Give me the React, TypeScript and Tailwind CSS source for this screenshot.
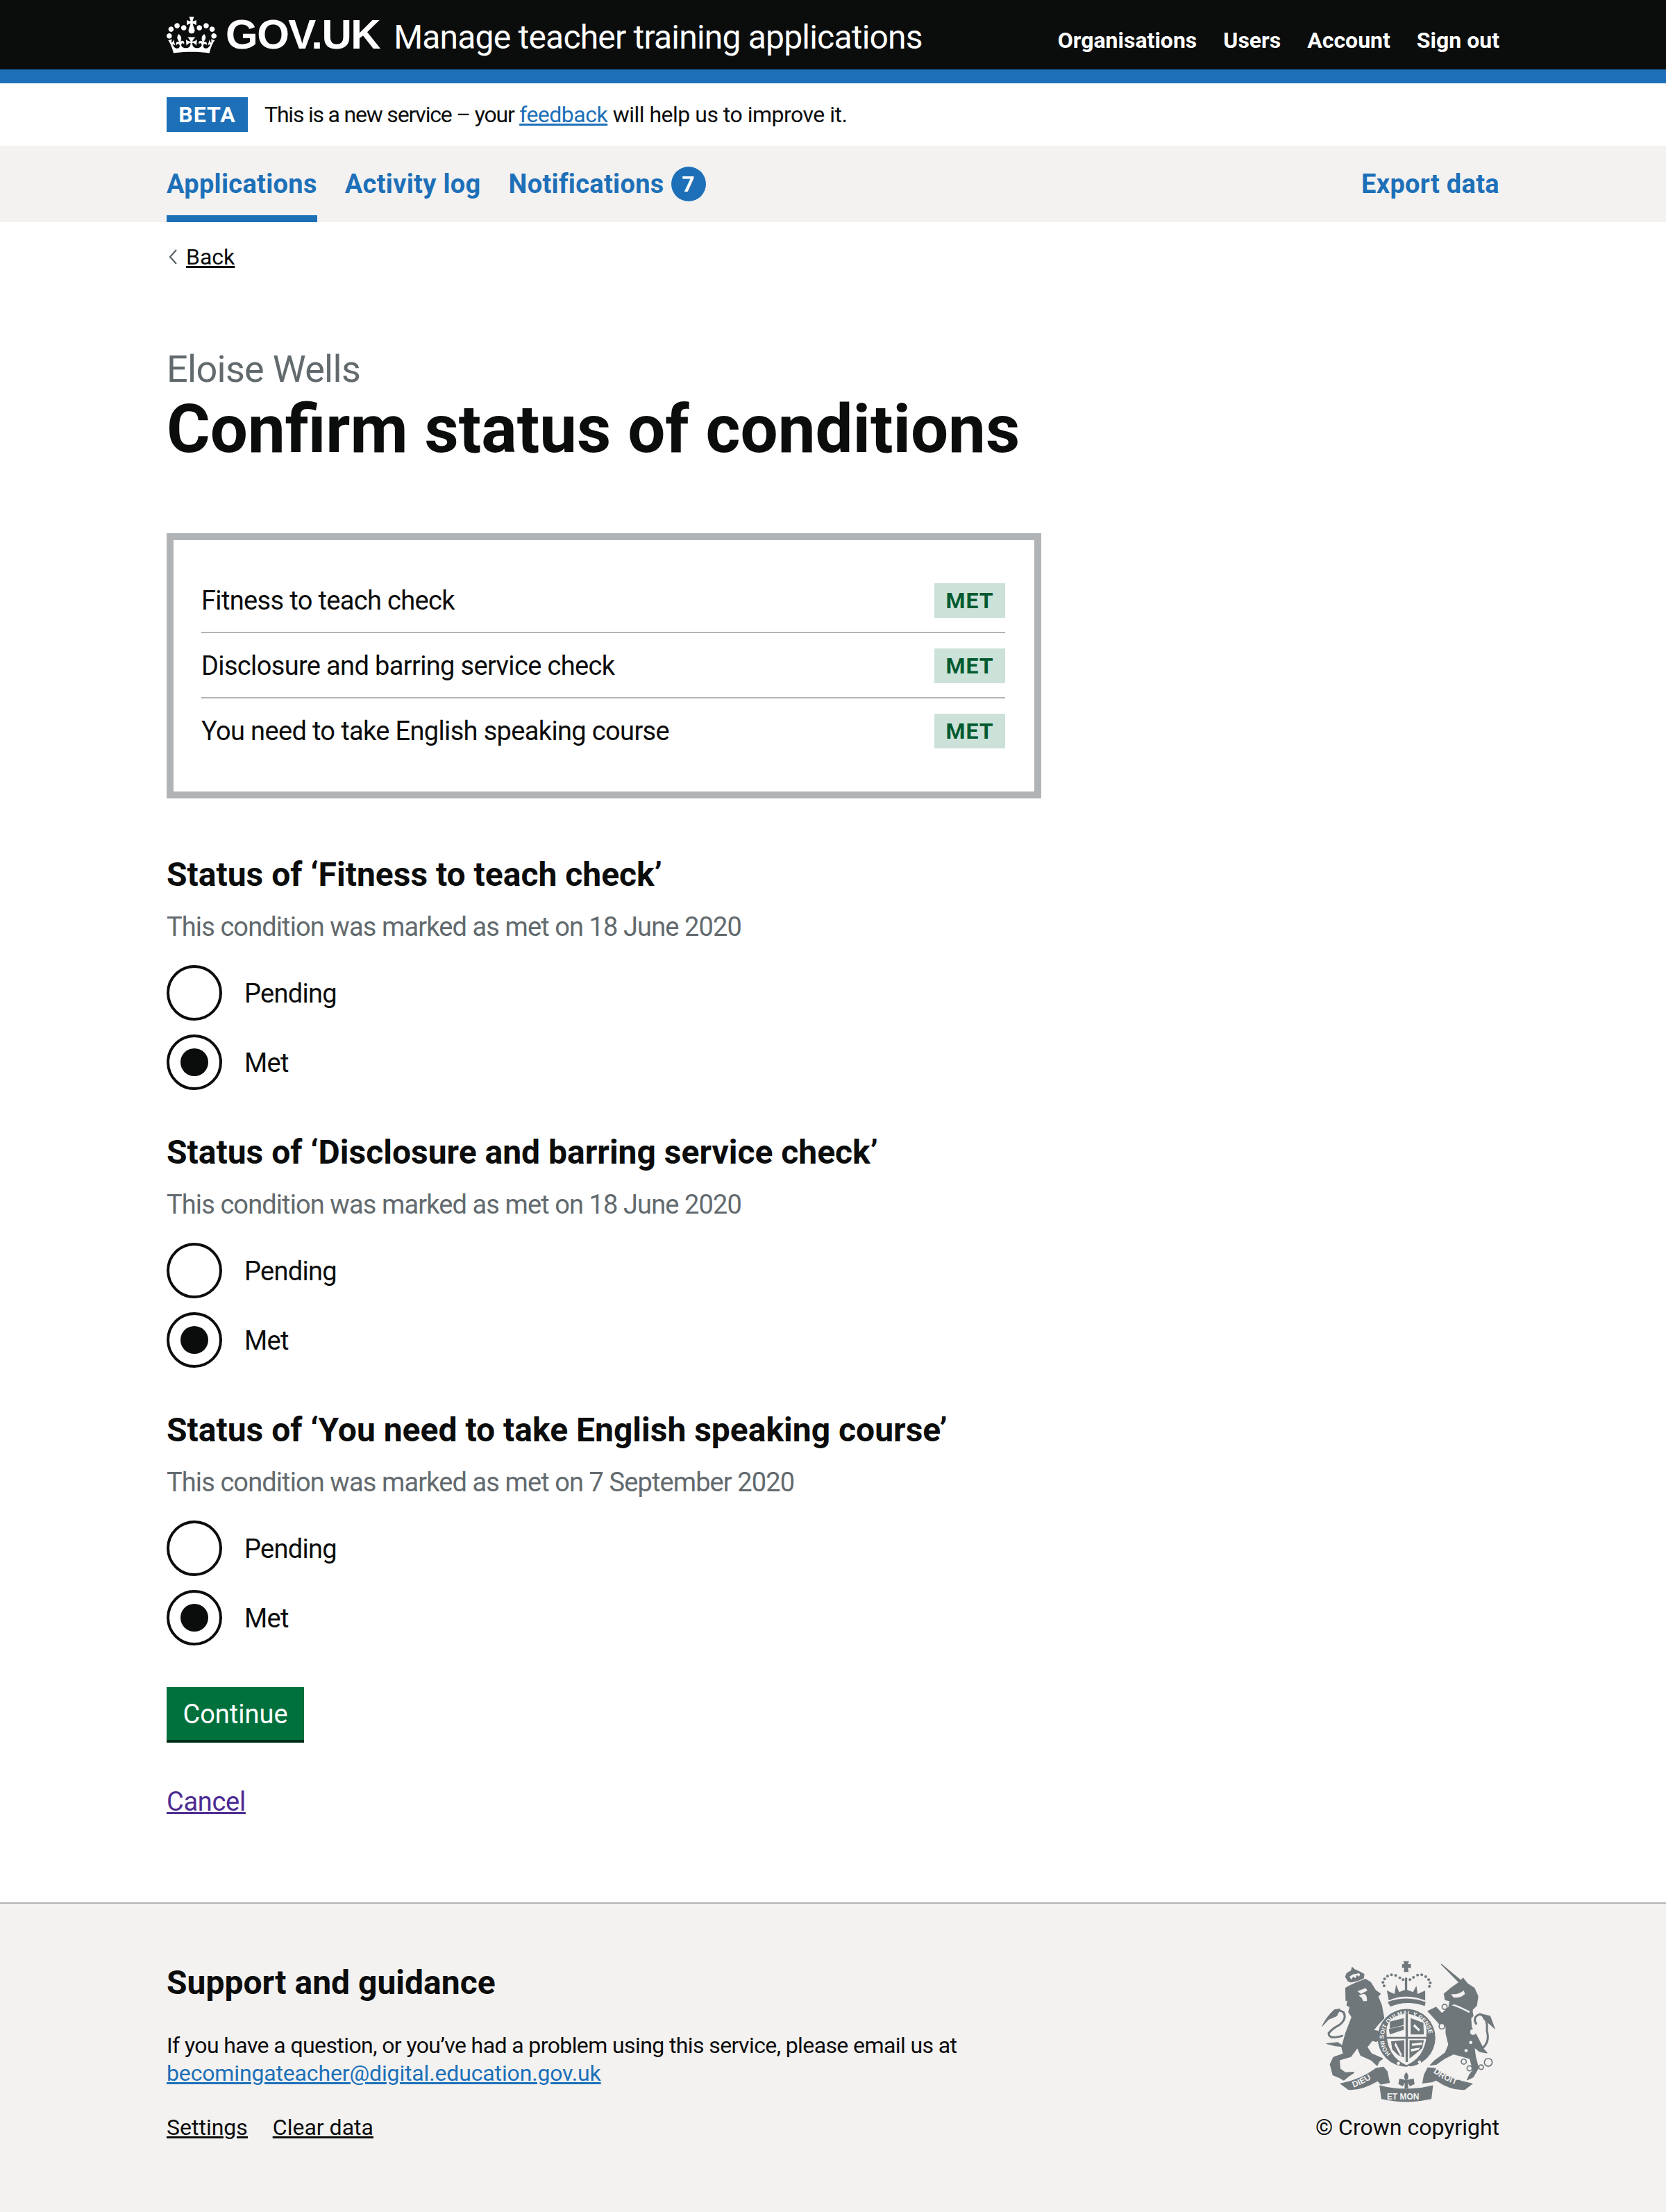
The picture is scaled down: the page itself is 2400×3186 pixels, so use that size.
import React from 'react';

const font = "font-['Roboto',sans-serif]";

const conditions = [
  { name: 'Fitness to teach check', date: '18 June 2020' },
  { name: 'Disclosure and barring service check', date: '18 June 2020' },
  { name: 'You need to take English speaking course', date: '7 September 2020' },
];

function Crown() {
  return (
    <svg viewBox="0 0 132 97" className="w-[72px] h-[53px] fill-white shrink-0">
      <path d="M25 30.2c3.5 1.5 7.7-.2 9.1-3.7 1.5-3.6-.2-7.8-3.9-9.2-3.6-1.4-7.6.3-9.1 3.9-1.4 3.5.3 7.5 3.9 9zM9 39.5c3.6 1.5 7.8-.2 9.2-3.7 1.5-3.6-.2-7.8-3.9-9.1-3.6-1.5-7.6.2-9.1 3.8-1.4 3.5.3 7.5 3.8 9zM4.4 57.2c3.5 1.5 7.7-.2 9.1-3.8 1.5-3.6-.2-7.7-3.9-9.1-3.5-1.5-7.6.3-9.1 3.8-1.4 3.5.3 7.6 3.9 9.1zm38.3-21.4c3.5 1.5 7.7-.2 9.1-3.8 1.5-3.6-.2-7.7-3.9-9.1-3.6-1.5-7.6.3-9.1 3.8-1.3 3.6.4 7.7 3.9 9.1zm64.4-5.6c-3.6 1.5-7.8-.2-9.1-3.7-1.5-3.6.2-7.8 3.8-9.2 3.6-1.4 7.7.3 9.2 3.9 1.3 3.5-.4 7.5-3.9 9zm15.9 9.3c-3.6 1.5-7.7-.2-9.1-3.7-1.5-3.6.2-7.8 3.7-9.1 3.6-1.5 7.7.2 9.2 3.8 1.5 3.5-.3 7.5-3.8 9zm4.7 17.7c-3.6 1.5-7.8-.2-9.2-3.8-1.5-3.6.2-7.7 3.9-9.1 3.6-1.5 7.7.3 9.2 3.8 1.3 3.5-.4 7.6-3.9 9.1zM89.3 35.8c-3.6 1.5-7.8-.2-9.2-3.8-1.4-3.6.2-7.7 3.9-9.1 3.6-1.5 7.7.3 9.2 3.8 1.4 3.6-.3 7.7-3.9 9.1zM69.7 17.7l8.9 4.7V9.3l-8.9 2.8c-.2-.3-.5-.6-.9-.9L72.4 0H59.6l3.6 11.2c-.3.3-.6.5-.9.9l-8.8-2.8v13.1l8.8-4.7c.3.3.6.7.9.9l-5 15.4v.1c-.2.8-.4 1.6-.4 2.4 0 4.1 3.1 7.5 7 8.1h.2c.3 0 .7.1 1 .1.4 0 .7 0 1-.1h.2c4-.6 7.1-4.1 7.1-8.1 0-.8-.1-1.7-.4-2.4V34l-5.1-15.4c.4-.2.7-.6 1-.9zM66 92.8c16.9 0 32.8 1.1 47.1 3.2 4-16.9 8.9-26.7 14-33.5l-9.6-3.4c1 4.9 1.1 7.2 0 10.2-1.5-1.4-3-4.3-4.2-8.7L108.6 76c2.8-2 5-3.2 7.5-3.3-4.4 9.4-10 11.9-13.6 11.2-4.3-.8-6.3-4.6-5.6-7.9 1-4.7 5.7-5.9 8-.5 4.3-8.7-3-11.4-7.6-8.8 7.1-7.2 7.9-13.5 2.1-21.1-8 6.1-8.1 12.3-4.5 20.8-4.7-5.4-12.1-2.5-9.5 6.2 3.4-5.2 7.9-2 7.2 3.1-.6 4.3-6.4 7.8-13.5 7.2-10.3-.9-10.9-8-11.2-13.8 2.5-.5 7.1 1.8 11 7.3L80.2 60c-4.1 4.4-8 5.3-12.3 5.4 1.4-4.4 8-11.6 8-11.6H55.5s6.4 7.2 7.9 11.6c-4.2-.1-8-1-12.3-5.4l1.4 16.4c3.9-5.5 8.5-7.7 10.9-7.3-.3 5.8-.9 12.8-11.1 13.8-7.2.6-12.9-2.9-13.5-7.2-.7-5 3.8-8.3 7.1-3.1 2.7-8.7-4.6-11.6-9.4-6.2 3.7-8.5 3.6-14.7-4.6-20.8-5.8 7.6-5 13.9 2.2 21.1-4.7-2.6-11.9.1-7.7 8.8 2.3-5.5 7.1-4.2 8.1.5.7 3.3-1.3 7.1-5.7 7.9-3.5.7-9-1.8-13.5-11.2 2.5.1 4.7 1.3 7.5 3.3l-4.7-15.4c-1.2 4.4-2.7 7.2-4.3 8.7-1.1-3-.9-5.3 0-10.2l-9.5 3.4c5 6.9 9.9 16.7 14 33.5 14.8-2.1 30.8-3.2 47.7-3.2z" />
    </svg>
  );
}

// Royal coat of arms, coordinates follow a 3x view of the crest
function Crest() {
  const c = '#6f777b';
  const bg = '#f3f2f1';
  const crownDots: [number, number][] = [
    [400, 205], [395, 190], [402, 175], [415, 163], [432, 157], [450, 160], [468, 170], [482, 178],
    [512, 178], [527, 168], [545, 158], [563, 157], [580, 165], [593, 178], [600, 192], [596, 207],
  ];
  return (
    <svg viewBox="130 90 760 625" className="w-[253px] h-[208px]">
      {/* lion */}
      <path fill={c} stroke={c} strokeWidth="6" strokeLinejoin="round" d="M235 215 Q270 195 320 178 L340 190 L362 225 L382 240 L372 250 L388 290 L398 345 L372 372 L352 398 L372 402 L395 430 L365 445 L348 440 L325 470 L345 500 L392 520 L378 530 L370 548 L345 525 L300 505 L285 470 L255 510 L205 525 L208 565 L232 582 L268 580 L250 592 L225 612 L205 600 L180 590 L168 545 L182 515 L225 500 L218 470 L235 410 L262 340 L248 318 L254 296 L240 288 L246 262 L236 268 Z" />
      <path fill={bg} d="M285 228 L320 215 L328 225 L300 240 Z M290 248 Q320 230 325 255 L326 270 L310 272 L302 255 Z" />
      <path fill="none" stroke={c} strokeWidth="9" d="M222 420 Q160 440 160 410 Q175 390 205 375 Q240 350 225 320 Q205 305 180 320" />
      <path fill={c} stroke={c} strokeWidth="3" strokeLinejoin="round" d="M132 380 Q150 340 185 308 L210 305 L195 335 L160 350 Z M150 455 L200 450 L225 468 L190 465 Z" />
      {/* lion crown */}
      <path fill={c} stroke={c} strokeWidth="4" strokeLinejoin="round" d="M245 185 Q255 195 310 172 L313 155 L295 145 L272 135 L262 125 L258 140 L240 150 L233 165 Z" />
      <path fill={bg} d="M250 165 L258 178 L266 165 L276 172 L282 158 L292 165 L296 155 L292 150 L265 155 Z" />
      {/* unicorn */}
      <path fill={c} stroke={c} strokeWidth="4" strokeLinejoin="round" d="M648 112 L732 182 L742 172 L760 195 L790 215 L806 250 L800 290 L780 310 L785 335 L775 345 L778 385 L800 420 L830 478 L845 495 L815 490 L790 470 L795 510 L808 560 L785 600 L760 612 L770 590 L785 570 L772 520 L740 510 L700 500 L660 520 L625 545 L600 548 L620 528 L665 495 L680 460 L668 410 L668 380 L640 370 L618 345 L590 315 L625 298 L650 325 L680 298 L685 270 L665 265 L660 240 L690 215 L725 190 Z" />
      <path fill={bg} d="M690 240 Q720 245 745 225 L750 240 Q730 260 700 255 Z" />
      <path fill={c} d="M686 280 L700 272 L712 285 L728 285 L742 298 L760 305 L785 310 L770 345 L725 325 L686 300 Z" />
      <path fill={bg} d="M692 288 L712 296 L732 304 L752 314 L768 322 L772 315 L750 305 L730 295 L705 285 Z" />
      <circle cx="785" cy="405" r="12" fill={bg} stroke={bg} />
      <circle cx="775" cy="450" r="7" fill={bg} />
      <circle cx="755" cy="485" r="7" fill={bg} />
      <circle cx="650" cy="380" r="12" fill={bg} stroke={c} strokeWidth="5" />
      <circle cx="662" cy="296" r="11" fill={bg} stroke={c} strokeWidth="5" />
      <circle cx="745" cy="533" r="11" fill={bg} stroke={c} strokeWidth="5" />
      <circle cx="770" cy="562" r="11" fill={bg} stroke={c} strokeWidth="5" />
      <circle cx="820" cy="557" r="10" fill={bg} stroke={c} strokeWidth="5" />
      <circle cx="851" cy="536" r="17" fill={bg} stroke={c} strokeWidth="5" />
      <path fill="none" stroke={c} strokeWidth="9" d="M800 372 Q780 340 815 328 Q850 340 845 400 Q860 450 820 480" />
      <path fill={c} d="M820 325 L860 335 L882 395 L855 370 L830 350 Z" />
      {/* imperial crown */}
      <path fill={c} d="M483 98 L508 98 L503 112 L516 110 L516 128 L503 127 L506 145 L485 145 L488 127 L478 128 L478 110 L488 112 Z" />
      <path fill={c} d="M420 268 Q495 235 578 268 L578 225 L545 240 L540 205 L525 232 L500 222 L500 170 L490 170 L490 222 L465 232 L452 200 L445 240 L412 225 Z" />
      {crownDots.map(([x, y]) => (
        <circle key={`${x}-${y}`} cx={x} cy={y} r="6" fill={c} />
      ))}
      <path fill={c} d="M415 275 Q495 245 580 275 L576 292 Q495 265 428 295 Z" />
      {/* garter ring and shield */}
      <circle cx="497" cy="430" r="125" fill={c} />
      <path id="garter" fill="none" d="M428 499 A98 98 0 1 1 566 499" />
      <text fontFamily="Liberation Sans, sans-serif" fontWeight="700" fontSize="26" fill={bg}>
        <textPath href="#garter">HONI SOIT QUI MAL Y PENSE</textPath>
      </text>
      <path fill={bg} d="M410 400 Q412 335 497 326 Q582 335 584 400 Q585 510 497 548 Q410 510 410 400 Z" />
      <path fill={c} d="M493 325 H503 V535 H493 Z M405 426 H590 V434 H405 Z" />
      <path fill={c} d="M425 360 L485 345 L485 375 L425 390 Z M420 392 L485 378 L485 395 L425 415 Z M515 345 L570 365 L572 415 L515 415 Z M510 440 L572 440 L565 475 L510 520 Z M430 445 L487 440 L487 515 L460 505 L435 480 Z" />
      <path fill={bg} d="M450 450 L478 505 L470 508 L445 460 Z M532 370 L556 395 L550 402 L526 380 Z M520 455 L565 450 L565 460 L520 465 Z M515 478 L555 472 L550 482 L518 490 Z" />
      <circle cx="462" cy="540" r="7" fill={bg} />
      <circle cx="507" cy="558" r="7" fill={bg} />
      <circle cx="553" cy="535" r="7" fill={bg} />
      {/* motto ribbon */}
      <path fill={c} d="M208 628 Q300 610 365 560 L398 555 L415 575 L425 625 L385 632 L372 618 Q300 660 245 655 Z" />
      <path fill={c} d="M785 628 Q690 610 620 560 L588 558 L572 590 L565 628 L610 622 L625 615 Q690 660 750 655 Z" />
      <path fill={c} d="M380 635 Q495 665 612 635 L605 695 Q495 720 388 695 Z" />
      <path id="dieu" fill="none" d="M268 645 Q320 625 372 590" />
      <text fontFamily="Liberation Sans, sans-serif" fontWeight="700" fontSize="36" fill={bg}>
        <textPath href="#dieu">DIEU</textPath>
      </text>
      <path id="droit" fill="none" d="M612 580 Q665 618 730 640" />
      <text fontFamily="Liberation Sans, sans-serif" fontWeight="700" fontSize="36" fill={bg}>
        <textPath href="#droit">DROIT</textPath>
      </text>
      <text x="412" y="697" fontFamily="Liberation Sans, sans-serif" fontWeight="700" fontSize="36" fill={bg}>ET MON</text>
      {/* fleur-de-lis */}
      <path fill={c} d="M496 578 Q512 596 500 612 L528 606 L532 630 L512 640 L502 625 L505 650 L488 650 L490 625 L480 640 L462 630 L466 606 L492 612 Q480 596 496 578 Z" />
    </svg>
  );
}

function Radio({ label, checked }: { label: string; checked?: boolean }) {
  return (
    <div className="flex items-center gap-8 h-20">
      <span className="flex items-center justify-center w-20 h-20 rounded-full border-4 border-[#0b0c0c] bg-white">
        {checked && <span className="block w-10 h-10 rounded-full bg-[#0b0c0c]" />}
      </span>
      <span className="pt-[2px] text-[38px] leading-none tracking-[-0.7px] text-[#0b0c0c]">{label}</span>
    </div>
  );
}

export default function App() {
  return (
    <div className={`${font} w-full min-h-[3186px] bg-white text-[#0b0c0c] flex flex-col`}>
      {/* Header */}
      <header className="bg-[#0b0c0c] border-b-[20px] border-[#1d70b8] h-[120px] px-[240px] flex items-start justify-between">
        <div className="flex items-center h-[100px]">
          <Crown />
          <span className="ml-[13px] text-[60px] leading-none font-bold tracking-[-1.5px] text-white font-['Liberation_Sans',sans-serif]">GOV.UK</span>
          <span className="ml-5 pt-2 text-[48px] leading-none tracking-[-0.8px] text-white">Manage teacher training applications</span>
        </div>
        <nav className="flex items-center h-[100px] pt-4 gap-[38px] text-[32px] font-bold text-white">
          <a>Organisations</a>
          <a>Users</a>
          <a>Account</a>
          <a>Sign out</a>
        </nav>
      </header>

      {/* Beta banner */}
      <div className="h-[90px] px-[240px] flex items-center">
        <strong className="flex items-center justify-center w-[117px] h-[50px] bg-[#1d70b8] text-white text-[32px] font-bold tracking-[1px]">BETA</strong>
        <p className="ml-6 text-[32px] tracking-[-0.5px]">
          <span className="tracking-[-1.2px]">This is a new service – your</span> <a className="text-[#1d70b8] underline">feedback</a> will help us to improve it.
        </p>
      </div>

      {/* Primary nav */}
      <nav className="h-[110px] bg-[#f3f2f1] px-[240px] flex justify-between text-[38px] font-bold tracking-[0.3px] text-[#1d70b8]">
        <div className="flex gap-10">
          <a className="flex items-center pb-0 border-b-[10px] border-[#1d70b8] pt-[10px]">Applications</a>
          <a className="flex items-center pt-[10px] pb-[10px]">Activity log</a>
          <a className="flex items-center pt-[10px] pb-[10px]">
            Notifications
            <span className="ml-[10px] flex items-center justify-center w-[50px] h-[50px] rounded-full bg-[#1d70b8] text-white text-[32px]">7</span>
          </a>
        </div>
        <a className="flex items-center pt-[10px] pb-[10px]">Export data</a>
      </nav>

      {/* Main */}
      <main className="px-[240px] flex-1">
        <a className="mt-[30px] flex items-center h-[40px] text-[32px]">
          <svg viewBox="0 0 12 24" className="ml-[3px] w-3 h-6 mr-[13px] fill-none stroke-[#505a5f] stroke-2"><path d="M11 2 2 12l9 10" /></svg>
          <span className="underline">Back</span>
        </a>

        <p className="mt-[106px] text-[54px] leading-[72px] tracking-[-0.7px] text-[#626a6e]">Eloise Wells</p>
        <h1 className="text-[96px] leading-[100px] font-bold">Confirm status of conditions</h1>

        {/* Summary box */}
        <div className="mt-[100px] w-[1260px] h-[382px] border-[10px] border-[#b1b4b6] pl-10 pr-[42px] pt-10">
          {conditions.map((item, i) => (
            <div key={item.name} className={`flex items-center justify-between pt-[22px] pb-5 ${i < 2 ? 'border-b-2 border-[#b1b4b6]' : ''}`}>
              <span className="text-[38px] leading-[50px] tracking-[-0.65px]">{item.name}</span>
              <strong className="flex items-center justify-center w-[102px] h-[50px] bg-[#cce2d8] text-[#005a30] text-[32px] font-bold tracking-[1px]">MET</strong>
            </div>
          ))}
        </div>

        {/* Status radios */}
        <div className="mt-[80px] flex flex-col gap-[60px]">
          {conditions.map((item) => (
            <section key={item.name}>
              <h2 className="text-[48px] leading-[60px] font-bold">Status of ‘{item.name}’</h2>
              <p className="mt-5 text-[38px] leading-[50px] tracking-[-0.9px] text-[#626a6e]">This condition was marked as met on {item.date}</p>
              <div className="mt-[30px] flex flex-col gap-5">
                <Radio label="Pending" />
                <Radio label="Met" checked />
              </div>
            </section>
          ))}
        </div>

        <button className="mt-[60px] block w-[198px] h-20 pt-[2px] bg-[#00703c] border-b-4 border-[#002d18] text-white text-[38px]">Continue</button>
        <a className="mt-[60px] block text-[38px] leading-[50px] tracking-[-0.3px] underline text-[#4c2c92]">Cancel</a>
      </main>

      {/* Footer */}
      <footer className="h-[446px] bg-[#f3f2f1] border-t-2 border-[#b1b4b6] px-[240px] pt-[84px] flex justify-between items-start">
        <div>
          <h2 className="text-[48px] leading-[60px] font-bold">Support and guidance</h2>
          <p className="mt-10 text-[32px] leading-[40px]">
            <span className="tracking-[-0.6px]">If you have a question, or you’ve had a problem using this service, please email us at</span>
            <br />
            <a className="text-[#1d70b8] underline tracking-[-0.15px]">becomingateacher@digital.education.gov.uk</a>
          </p>
          <div className="mt-[38px] flex gap-9 text-[32px] leading-[40px] underline">
            <a>Settings</a>
            <a>Clear data</a>
          </div>
        </div>
        <div className="flex flex-col items-end -mt-1">
          <div className="mr-[3px]">
            <Crest />
          </div>
          <span className="mt-[14px] text-[32px] leading-[40px]">© Crown copyright</span>
        </div>
      </footer>
    </div>
  );
}
